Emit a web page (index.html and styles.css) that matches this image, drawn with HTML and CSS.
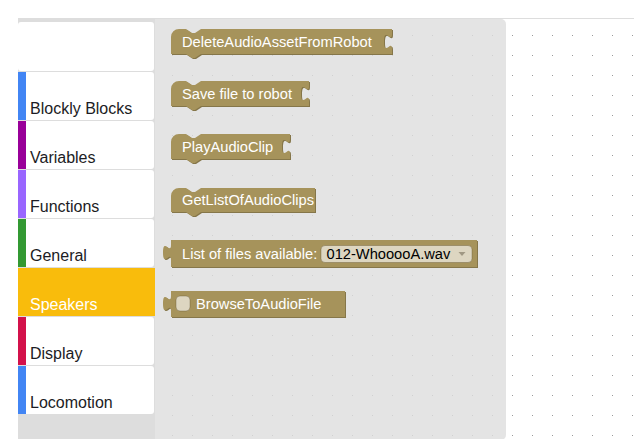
FILE: index.html
```html
<!DOCTYPE html>
<html>
<head>
<meta charset="utf-8">
<link rel="stylesheet" href="styles.css">
</head>
<body>
<div class="app">
  <div class="blockly">
    <nav class="toolbox">
      <div class="cat cat-blank"></div>
      <div class="cat c-blue"><span>Blockly Blocks</span></div>
      <div class="cat c-purple"><span>Variables</span></div>
      <div class="cat c-violet"><span>Functions</span></div>
      <div class="cat c-green"><span>General</span></div>
      <div class="cat c-yellow sel"><span>Speakers</span></div>
      <div class="cat c-red"><span>Display</span></div>
      <div class="cat c-blue"><span>Locomotion</span></div>
    </nav>
    <div class="workspace">
      <div class="flyout">
        <svg class="block" width="232" height="30" viewBox="0 0 232 30">
          <path class="dark" transform="translate(1,1)" d="M8,8 A8,8 0 0 1 16,0 H23 l6,4 h3 l6,-4 H229 V5 c0,10 -8,-8 -8,7.5 s8,-2.5 8,7.5 V25 H38 l-6,4 h-3 l-6,-4 H8 Z"/>
          <path class="body" d="M8,8 A8,8 0 0 1 16,0 H23 l6,4 h3 l6,-4 H229 V5 c0,10 -8,-8 -8,7.5 s8,-2.5 8,7.5 V25 H38 l-6,4 h-3 l-6,-4 H8 Z"/>
          <text class="lbl" x="19" y="17.5">DeleteAudioAssetFromRobot</text>
        </svg>
        <svg class="block" width="150" height="30" viewBox="0 0 150 30">
          <path class="dark" transform="translate(1,1)" d="M8,8 A8,8 0 0 1 16,0 H23 l6,4 h3 l6,-4 H146 V5 c0,10 -8,-8 -8,7.5 s8,-2.5 8,7.5 V25 H38 l-6,4 h-3 l-6,-4 H8 Z"/>
          <path class="body" d="M8,8 A8,8 0 0 1 16,0 H23 l6,4 h3 l6,-4 H146 V5 c0,10 -8,-8 -8,7.5 s8,-2.5 8,7.5 V25 H38 l-6,4 h-3 l-6,-4 H8 Z"/>
          <text class="lbl" x="19" y="17.5">Save file to robot</text>
        </svg>
        <svg class="block m1" width="130" height="30" viewBox="0 0 130 30">
          <path class="dark" transform="translate(1,1)" d="M8,8 A8,8 0 0 1 16,0 H23 l6,4 h3 l6,-4 H127 V5 c0,10 -8,-8 -8,7.5 s8,-2.5 8,7.5 V25 H38 l-6,4 h-3 l-6,-4 H8 Z"/>
          <path class="body" d="M8,8 A8,8 0 0 1 16,0 H23 l6,4 h3 l6,-4 H127 V5 c0,10 -8,-8 -8,7.5 s8,-2.5 8,7.5 V25 H38 l-6,4 h-3 l-6,-4 H8 Z"/>
          <text class="lbl" x="19" y="17.5">PlayAudioClip</text>
        </svg>
        <svg class="block m2" width="155" height="30" viewBox="0 0 155 30">
          <path class="dark" transform="translate(1,1)" d="M8,8 A8,8 0 0 1 16,0 H23 l6,4 h3 l6,-4 H152 V24 H38 l-6,4 h-3 l-6,-4 H8 Z"/>
          <path class="body" d="M8,8 A8,8 0 0 1 16,0 H23 l6,4 h3 l6,-4 H152 V24 H38 l-6,4 h-3 l-6,-4 H8 Z"/>
          <text class="lbl" x="19" y="17">GetListOfAudioClips</text>
        </svg>
        <svg class="block" width="317" height="29" viewBox="0 0 317 29">
          <path class="dark" transform="translate(1,1)" d="M8,0 H314 V27 H8 V20 c0,-10 -8,8 -8,-7.5 s8,2.5 8,-7.5 Z"/>
          <path class="body" d="M8,0 H314 V27 H8 V20 c0,-10 -8,8 -8,-7.5 s8,2.5 8,-7.5 Z"/>
          <text class="lbl" x="19" y="18.5">List of files available:</text>
          <rect class="field" x="158" y="5.5" width="151" height="17" rx="4" ry="4"/>
          <text class="dd" x="163.5" y="18.5">012-WhooooA.wav</text>
          <polygon class="arrow" points="295.5,12 302.5,12 299,16"/>
        </svg>
        <svg class="block" width="185" height="28" viewBox="0 0 185 28">
          <path class="dark" transform="translate(1,1)" d="M8,0 H182 V26 H8 V20 c0,-10 -8,8 -8,-7.5 s8,2.5 8,-7.5 Z"/>
          <path class="body" d="M8,0 H182 V26 H8 V20 c0,-10 -8,8 -8,-7.5 s8,2.5 8,-7.5 Z"/>
          <rect class="field" x="13" y="5" width="14" height="15" rx="4" ry="4"/>
          <text class="lbl" x="33" y="17.5">BrowseToAudioFile</text>
        </svg>
      </div>
    </div>
  </div>
</div>
</body>
</html>
```
FILE: styles.css
```css
html, body {
  margin: 0;
  padding: 0;
  background: #fff;
  font-family: "Liberation Sans", Arial, sans-serif;
}

.app {
  height: 100vh;
  box-sizing: border-box;
  padding: 18px 0 0 18px;
  overflow: hidden;
}

.blockly {
  display: flex;
  height: 100%;
  border-top: 1px solid #dddddd;
}

.toolbox {
  width: 137px;
  flex: 0 0 137px;
  background: #dddddd;
  padding-top: 3px;
  display: flex;
  flex-direction: column;
  gap: 1px;
}

.cat {
  width: 136px;
  height: 48px;
  flex: 0 0 48px;
  box-sizing: border-box;
  background: #fff;
  border-left: 8px solid transparent;
  border-radius: 0 3px 3px 0;
  padding: 0 0 2px 4px;
  display: flex;
  align-items: flex-end;
  font-size: 16px;
  line-height: 18px;
  color: #1c1c24;
}

.cat-blank {
  height: 49px;
  flex-basis: 49px;
  border-left: 0;
  border-radius: 3px;
}

.c-blue { border-left-color: #4285f4; }
.c-purple { border-left-color: #990099; }
.c-violet { border-left-color: #9966ff; }
.c-green { border-left-color: #339933; }
.c-yellow { border-left-color: #f9bc0c; }
.c-red { border-left-color: #d3114b; }

.cat.sel {
  width: 137px;
  background: #f9bc0c;
  color: #fff;
  border-radius: 0;
}

.workspace {
  flex: 1;
  background-color: #fff;
  background-image: conic-gradient(from 270deg at 1px 1px, #999 25%, transparent 0);
  background-size: 20px 20px;
  background-position: 17px 16px;
}

.flyout {
  width: 351px;
  height: 100%;
  box-sizing: border-box;
  background: rgba(221, 221, 221, 0.8);
  border-radius: 0 5px 5px 0;
  padding: 10px 0 0 8px;
  display: flex;
  flex-direction: column;
  align-items: flex-start;
  gap: 22px;
}

.block {
  display: block;
  overflow: visible;
}

.m1 { margin-top: 1px; }
.m2 { margin-top: 2px; }

.block .body { fill: #a6935b; }
.block .dark { fill: #857649; }

.block .lbl {
  fill: #fff;
  font-family: "Liberation Sans", Arial, sans-serif;
  font-size: 14.667px;
}

.block .field {
  fill: #ddd6c1;
  stroke: rgba(90, 75, 40, 0.35);
  stroke-width: 1;
}

.block .dd {
  fill: #000;
  font-family: "Liberation Sans", Arial, sans-serif;
  font-size: 14.667px;
}

.block .arrow { fill: #a09883; }
```
